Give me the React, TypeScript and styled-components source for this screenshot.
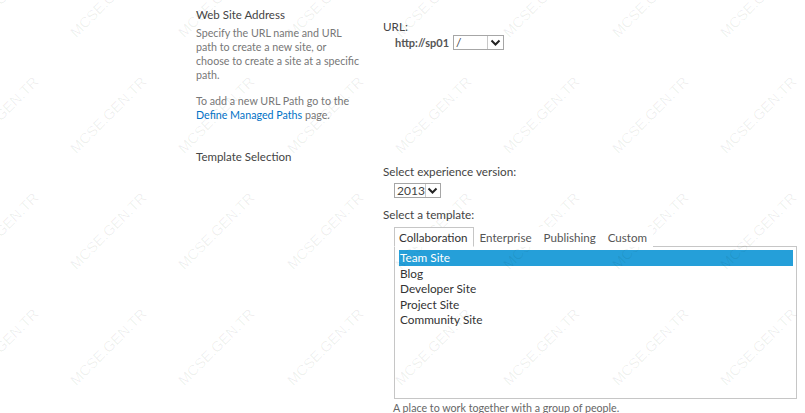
import React from 'react';
import styled, {createGlobalStyle} from 'styled-components';

const GlobalStyle = createGlobalStyle`
  html, body {
    margin: 0;
    padding: 0;
    background: #fff;
  }
  body {
    font-family: Lato, "Open Sans", "Liberation Sans", sans-serif;
    font-size: 12px;
    color: #444;
  }
`;

const Page = styled.div`
  position: relative;
  width: 805px;
  height: 413px;
  overflow: hidden;
  padding-left: 196px;
  box-sizing: border-box;
`;

const Section = styled.div<{ $bottom: number }>`
  display: grid;
  grid-template-columns: 187px 1fr;
  padding-top: 7px;
  padding-bottom: ${p => p.$bottom}px;
`;

const SectionTitle = styled.div`
  font-size: 11.5px;
  line-height: 15px;
  color: #444;
`;

const Description = styled.p<{ $gap: number }>`
  margin: ${p => p.$gap}px 0 0;
  font-size: 10.7px;
  line-height: 14px;
  color: #777;
  white-space: nowrap;
`;

const Link = styled.a`
  color: #0072c6;
  text-decoration: none;
`;

const Field = styled.div<{ $top: number }>`
  padding-top: ${p => p.$top}px;
  display: flex;
  flex-direction: column;
  align-items: flex-start;
`;

const Label = styled.div<{ $gap?: number }>`
  margin-top: ${p => p.$gap ?? 0}px;
  line-height: 15px;
  font-size: 11.7px;
  color: #444;
`;

const UrlRow = styled.div`
  display: flex;
  align-items: center;
  gap: 4px;
  margin-top: 1px;
  padding-left: 12px;
`;

const Host = styled.span`
  font-weight: 700;
  font-size: 11px;
  color: #555;
`;

const Dropdown = styled.div<{ $width: number; $gap?: number }>`
  display: flex;
  align-items: stretch;
  width: ${p => p.$width}px;
  height: 15px;
  margin-top: ${p => p.$gap ?? 0}px;
  margin-left: ${p => (p.$gap !== undefined ? 11 : 0)}px;
  border: 1px solid #a6a6a6;
  box-sizing: border-box;
  background: #fff;
`;

const DropdownValue = styled.span`
  flex: 1;
  padding-left: 2px;
  line-height: 13px;
  font-size: 12px;
  color: #444;
`;

const DropdownButton = styled.span`
  width: 15px;
  display: flex;
  align-items: center;
  justify-content: center;
  border-left: 1px solid #c8c8c8;
  background: #fff;
`;

const Tabs = styled.div`
  display: flex;
  margin: 5px 0 0 11px;
  height: 20px;
`;

const Tab = styled.div<{ $active?: boolean }>`
  padding: 0 5px 0 4px;
  line-height: 19px;
  font-size: 11.6px;
  color: ${p => (p.$active ? '#333' : '#555')};
  border: 1px solid ${p => (p.$active ? '#c6c6c6' : 'transparent')};
  border-bottom: 1px solid ${p => (p.$active ? '#fff' : 'transparent')};
  background: #fff;
  position: relative;
  z-index: 1;

  & + & {
    padding-left: 5px;
  }
`;

const Panel = styled.div`
  margin: -1px 0 0 11px;
  width: 403px;
  height: 153px;
  box-sizing: border-box;
  border: 1px solid #c6c6c6;
  padding: 3px 3px 0 4px;
`;

const Option = styled.div<{ $selected?: boolean }>`
  height: 15.5px;
  line-height: 15px;
  padding-left: 1px;
  font-size: 11.8px;
  color: ${p => (p.$selected ? '#fff' : '#333')};
  background: ${p => (p.$selected ? '#259fd9' : 'transparent')};
`;

const Hint = styled.div`
  margin: 2px 0 0 10px;
  font-size: 10.7px;
  line-height: 14px;
  color: #666;
`;

const Watermarks = styled.div`
  position: absolute;
  left: -54px;
  top: -59px;
  display: grid;
  grid-template-columns: repeat(9, 108.3px);
  grid-auto-rows: 116px;
  pointer-events: none;
`;

const Mark = styled.div`
  display: flex;
  align-items: center;
  justify-content: center;

  span {
    transform: rotate(-45deg);
    font-family: "Liberation Sans", Arial, sans-serif;
    font-size: 14.5px;
    color: rgba(0, 0, 0, 0.065);
    white-space: nowrap;
  }
`;

const Chevron = () => (
  <svg width="11" height="8" viewBox="0 0 11 8">
    <path d="M1.5 1.5 L5.5 5.5 L9.5 1.5" fill="none" stroke="#222" strokeWidth="2" />
  </svg>
);

const templates = ['Team Site', 'Blog', 'Developer Site', 'Project Site', 'Community Site'];
const tabs = ['Collaboration', 'Enterprise', 'Publishing', 'Custom'];

const App = () => (
  <>
    <GlobalStyle />
    <Page>
      <Section $bottom={20}>
        <div>
          <SectionTitle>Web Site Address</SectionTitle>
          <Description $gap={4}>
            Specify the URL name and URL<br />
            path to create a new site, or<br />
            choose to create a site at a specific<br />
            path.
          </Description>
          <Description $gap={12}>
            To add a new URL Path go to the<br />
            <Link href="#">Define Managed Paths</Link> page.
          </Description>
        </div>
        <Field $top={12}>
          <Label>URL:</Label>
          <UrlRow>
            <Host>http://sp01</Host>
            <Dropdown $width={51}>
              <DropdownValue>/</DropdownValue>
              <DropdownButton><Chevron /></DropdownButton>
            </Dropdown>
          </UrlRow>
        </Field>
      </Section>
      <Section $bottom={0}>
        <div>
          <SectionTitle>Template Selection</SectionTitle>
        </div>
        <Field $top={15}>
          <Label>Select experience version:</Label>
          <Dropdown $width={47} $gap={4}>
            <DropdownValue>2013</DropdownValue>
            <DropdownButton><Chevron /></DropdownButton>
          </Dropdown>
          <Label $gap={9}>Select a template:</Label>
          <Tabs>
            {tabs.map((t, i) => (
              <Tab key={t} $active={i === 0}>{t}</Tab>
            ))}
          </Tabs>
          <Panel>
            {templates.map((t, i) => (
              <Option key={t} $selected={i === 0}>{t}</Option>
            ))}
          </Panel>
          <Hint>A place to work together with a group of people.</Hint>
        </Field>
      </Section>
      <Watermarks>
        {Array.from({length: 45}).map((_, i) => (
          <Mark key={i}><span>MCSE.GEN.TR</span></Mark>
        ))}
      </Watermarks>
    </Page>
  </>
);

export default App;
